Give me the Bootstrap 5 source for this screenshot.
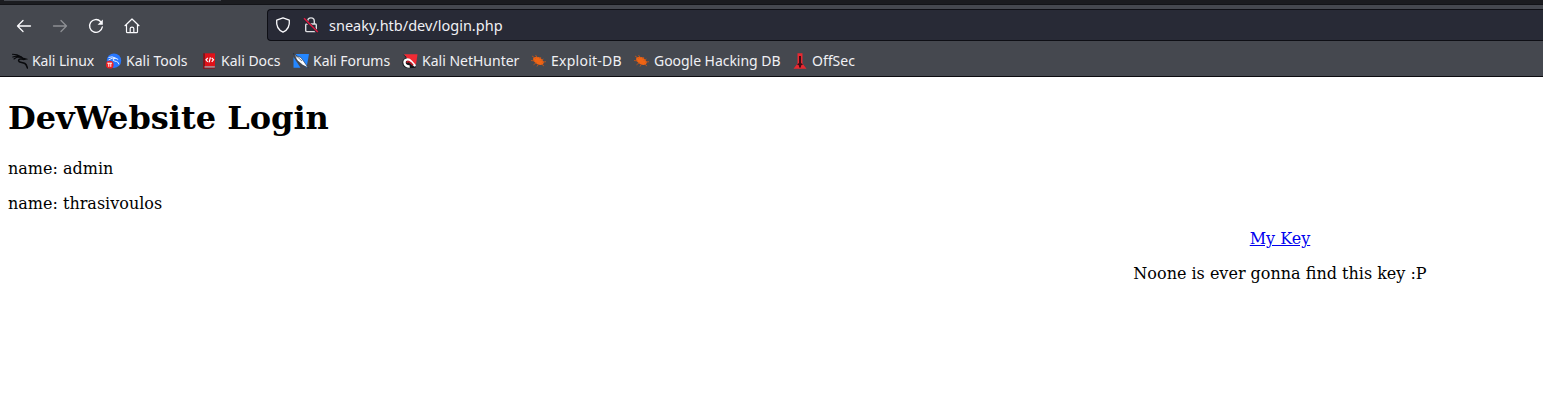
<!DOCTYPE html>
<html lang="en">
<head>
<meta charset="utf-8">
<title>DevWebsite Login</title>
<link href="https://cdn.jsdelivr.net/npm/bootstrap@5.3.0/dist/css/bootstrap.min.css" rel="stylesheet">
<style>
body{background:#fff;color:#000;font:16px/19px "DejaVu Serif",serif;overflow:hidden}
.chrome{height:77px;background:#45484f;border-bottom:1px solid #0c0c10;color:#f0f0f4;font-family:"Noto Sans",sans-serif}
.tab-strip{height:5px;background:#1b1c20;border-bottom:1px solid #121317}
.active-tab{height:1px;width:217px;margin-left:4px;background:#45484f}
.tools{height:40px;padding:4px 0 4px 16px}
.nav-icons{width:251px;gap:20px;padding-top:1px}
.nav-icons svg,.address svg{width:16px;height:16px;flex:none}
.address{height:32px;background:#282a36;border:1px solid #0e0f15;border-right:0;border-radius:4px 0 0 4px;padding-left:7px;font-size:14.5px}
.address svg+svg{margin-left:12px}
.address span{margin-left:10px;padding-top:1px}
.bookmarks{height:31px;font-size:14px;padding-left:12px}
.bookmarks span{display:block;white-space:nowrap;line-height:20px}
.bookmarks svg{width:16px;height:16px;flex:none;margin-right:4px}
.bookmarks .entry{display:flex;align-items:center;flex:none}
.page{padding:22px 8px 0}
.page h1{font-size:32px;line-height:38px;font-weight:700;margin:0 0 22px}
.page p{margin:0 0 16px}
.key-block{width:526px;margin-right:-8px}
.key-block a{color:#0000ee;text-decoration:underline}
</style>
</head>
<body>
<header class="chrome">
  <div class="tab-strip"><div class="active-tab"></div></div>
  <div class="tools d-flex align-items-center">
    <nav class="nav-icons d-flex align-items-center flex-shrink-0">
      <svg viewBox="0 0 16 16" fill="none" stroke="#fbfbfe" stroke-width="1.3" stroke-linecap="round" stroke-linejoin="round"><path d="M14.5 8H1.5M7 2.5 1.5 8 7 13.5"/></svg>
      <svg viewBox="0 0 16 16" fill="none" stroke="#8d8f94" stroke-width="1.3" stroke-linecap="round" stroke-linejoin="round"><path d="M1.5 8h13M9 2.5 14.5 8 9 13.5"/></svg>
      <svg viewBox="0 0 16 16" fill="none" stroke="#fbfbfe" stroke-width="1.4" stroke-linecap="round"><path d="M12.5 3.4A6.4 6.4 0 1 0 14.3 9"/><path d="M14.8 1.5v5.2H9.6z" fill="#fbfbfe" stroke="none"/></svg>
      <svg viewBox="0 0 16 16" fill="none" stroke="#fbfbfe" stroke-width="1.2" stroke-linejoin="round" stroke-linecap="round"><path d="M1 7.7 8 1l7 6.7M2.5 6.5v7.2q0 1 1 1h9q1 0 1-1V6.5M6.2 14.5v-4q0-1.3 1.8-1.3t1.8 1.3v4"/></svg>
    </nav>
    <div class="address d-flex align-items-center flex-grow-1">
      <svg viewBox="0 0 16 16" fill="none" stroke="#fbfbfe" stroke-width="1.3" stroke-linejoin="round"><path d="M8 .8 14.3 3.2C14.9 8.8 12.5 13 8 15.2 3.5 13 1.1 8.8 1.7 3.2Z"/></svg>
      <svg viewBox="0 0 16 16" fill="none" stroke="#dedee2" stroke-width="1.4"><path d="M4.7 7V4.2a3.3 3.3 0 0 1 6.6 0V7"/><rect x="2.7" y="7" width="10.6" height="7.6" rx="1"/><path d="m1 1.7 13.6 13.6" stroke="#282a36" stroke-width="2.8"/><path d="m1 1.2 13.8 13.8" stroke="#e2173f"/></svg>
      <span>sneaky.htb/dev/login.php</span>
    </div>
  </div>
  <nav class="bookmarks d-flex">
    <div class="entry" style="width:94px"><svg viewBox="0 0 16 16" fill="none" stroke="#08090c" stroke-linecap="round"><path d="M.5 1.2 5 1.7l4 2M.8 4 5 2.9l4 1.4M2 6l3-2 4 .2" stroke-width="1.1"/><path d="M6 3.5c2-.2 3.5.4 4.6 1.6l2.8.9-2 .4c-2-.8-5-.7-4.8 1.4.3 2 4 1.3 6.3 2.7 1.6 1 2 2.5 2.6 4.6" stroke-width="1.5"/></svg><span style="letter-spacing:-.1px">Kali Linux</span></div>
    <div class="entry" style="width:95px"><svg viewBox="0 0 16 16"><circle cx="8" cy="7.7" r="7.2" fill="#2777ff"/><path d="M2.5 4.5q4-1.5 6.5.4l3.2 1.6M2.5 7q4-2.8 7-1.6-3 0-2.3 2 1.2.7 3.5 1.2 2 .7 2.2 2.8" fill="none" stroke="#e4efff"/><circle cx="3.7" cy="11.7" r="3.9" fill="#ed2024"/><path d="M1.3 10.2h4.8M2.8 10.2v3.6M4.8 10.2v3.6" stroke="#fff" fill="none"/></svg><span>Kali Tools</span></div>
    <div class="entry" style="width:92px"><svg viewBox="0 0 16 16"><path d="M2 .3h2v15.2H2z" fill="#7e171c"/><path d="M4 .3h10v13.2H4z" fill="#df1119"/><path d="M3.5 13.4h10.3v1.4H3.5z" fill="#c6bec5"/><path d="M2 14.6h12v1.1H2z" fill="#8a151c"/><path d="M6.8 4.8 5 6.8l1.8 2M10.7 4.8l1.8 2-1.8 2M9.4 4.3 8.1 9.3" fill="none" stroke="#fff" stroke-width="1.2"/></svg><span>Kali Docs</span></div>
    <div class="entry" style="width:109px"><svg viewBox="0 0 16 16"><path d="M2.5 1H16l-2.5 14L7 8z" fill="#2587ff"/><path d="M.5 4 7.5 14.8H.5z" fill="#2587ff"/><path d="m.5 .5 2.7 2.3 4.7 1.7 3.5 4.8 3.8 5.5-5.4-2.6-5.3-4.5L2 3.8z" fill="#fff" stroke="#18253b" stroke-width=".6"/><path d="m.5 .5 2.7 4.2M3 2.7 9 8" stroke="#18253b" stroke-width=".6"/></svg><span style="letter-spacing:-.02px">Kali Forums</span></div>
    <div class="entry" style="width:129px"><svg viewBox="0 0 16 16"><path d="M2 1.3h13.5l-1.5 10.2-4-1L4 4z" fill="#f02b34"/><path d="M.5 1 4.5 4 1 7C-.5 11 1 15 7 15.2l7-.5" fill="#111418"/><path d="M13.2 13 9.2 8.5C6.2 5.2 2.4 6.3 2.5 9.5c.1 2.7 2.3 4.2 5.2 4" fill="none" stroke="#fff" stroke-width="2.4"/><path d="M4.7 9.6c1-2.2 3.3-1 6.3 2.7" fill="none" stroke="#b71925" stroke-width="1.7"/></svg><span>Kali NetHunter</span></div>
    <div class="entry" style="width:103px"><svg viewBox="0 0 16 16"><path d="M2.5 4.5C5.5 3 8.5 4 10.5 6l2.5 3-1 2.5c-3 1-5.5.2-7.5-1.7C2.5 8.5 1.5 6.5 2.5 4.5" fill="#ef6414"/><path d="m1 3 4 2.5M4.5 2 6.5 5M0 7.5l4 .5M2.5 11.8l3-2.3M6 13.5 7.5 11M10 4 8.5 6M12.5 6l-3 1.5M15 8.7l-4 .5M13 13l-2.5-2" stroke="#cd5717" stroke-width=".8"/></svg><span style="letter-spacing:.25px">Exploit-DB</span></div>
    <div class="entry" style="width:158px"><svg viewBox="0 0 16 16"><path d="M2.5 4.5C5.5 3 8.5 4 10.5 6l2.5 3-1 2.5c-3 1-5.5.2-7.5-1.7C2.5 8.5 1.5 6.5 2.5 4.5" fill="#ef6414"/><path d="m1 3 4 2.5M4.5 2 6.5 5M0 7.5l4 .5M2.5 11.8l3-2.3M6 13.5 7.5 11M10 4 8.5 6M12.5 6l-3 1.5M15 8.7l-4 .5M13 13l-2.5-2" stroke="#cd5717" stroke-width=".8"/></svg><span style="letter-spacing:-.04px">Google Hacking DB</span></div>
    <div class="entry"><svg viewBox="0 0 16 16"><path d="M5.5 .2h5v10.3l4 5.3h-13l4-5.3z" fill="#e82831"/><path d="M7 3h2v7l2 1.5-2 1v2H7v-2l-2-1L7 10z" fill="#410d14"/></svg><span>OffSec</span></div>
  </nav>
</header>
<main class="page">
  <h1>DevWebsite Login</h1>
  <p>name: admin</p>
  <p>name: thrasivoulos</p>
  <div class="key-block ms-auto text-center">
    <p><a href="#">My Key</a></p>
    <p>Noone is ever gonna find this key :P</p>
  </div>
</main>
<script src="https://cdn.jsdelivr.net/npm/bootstrap@5.3.0/dist/js/bootstrap.bundle.min.js"></script>
</body>
</html>
